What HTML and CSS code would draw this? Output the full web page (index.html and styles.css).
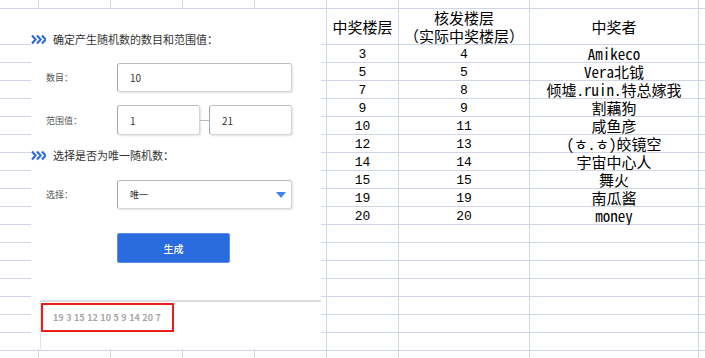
FILE: index.html
```html
<!DOCTYPE html>
<html lang="zh-CN">
<head>
<meta charset="utf-8">
<title>随机数</title>
<link rel="stylesheet" href="styles.css">
</head>
<body>
<div class="sheet">
  <div class="row"><i></i><i></i><i></i><i></i><i></i><i></i><i></i><i></i><i></i></div>
  <div class="row head"><i></i><i></i><i></i><i></i><i></i><b>中奖楼层</b><b class="two">核发楼层<br>（实际中奖楼层）</b><b>中奖者</b><i></i></div>
  <div class="row"><i></i><i></i><i></i><i></i><i></i><b class="num">3</b><b class="num">4</b><b>Amikeco</b><i></i></div>
  <div class="row"><i></i><i></i><i></i><i></i><i></i><b class="num">5</b><b class="num">5</b><b>Vera北钺</b><i></i></div>
  <div class="row"><i></i><i></i><i></i><i></i><i></i><b class="num">7</b><b class="num">8</b><b>倾墟.ruin.特总嫁我</b><i></i></div>
  <div class="row"><i></i><i></i><i></i><i></i><i></i><b class="num">9</b><b class="num">9</b><b>割藕狗</b><i></i></div>
  <div class="row"><i></i><i></i><i></i><i></i><i></i><b class="num">10</b><b class="num">11</b><b>咸鱼彦</b><i></i></div>
  <div class="row"><i></i><i></i><i></i><i></i><i></i><b class="num">12</b><b class="num">13</b><b>(ㅎ.ㅎ)皎镜空</b><i></i></div>
  <div class="row"><i></i><i></i><i></i><i></i><i></i><b class="num">14</b><b class="num">14</b><b>宇宙中心人</b><i></i></div>
  <div class="row"><i></i><i></i><i></i><i></i><i></i><b class="num">15</b><b class="num">15</b><b>舞火</b><i></i></div>
  <div class="row"><i></i><i></i><i></i><i></i><i></i><b class="num">19</b><b class="num">19</b><b>南瓜酱</b><i></i></div>
  <div class="row"><i></i><i></i><i></i><i></i><i></i><b class="num">20</b><b class="num">20</b><b>money</b><i></i></div>
  <div class="row"><i></i><i></i><i></i><i></i><i></i><i></i><i></i><i></i><i></i></div>
  <div class="row"><i></i><i></i><i></i><i></i><i></i><i></i><i></i><i></i><i></i></div>
  <div class="row"><i></i><i></i><i></i><i></i><i></i><i></i><i></i><i></i><i></i></div>
  <div class="row"><i></i><i></i><i></i><i></i><i></i><i></i><i></i><i></i><i></i></div>
  <div class="row"><i></i><i></i><i></i><i></i><i></i><i></i><i></i><i></i><i></i></div>
  <div class="row"><i></i><i></i><i></i><i></i><i></i><i></i><i></i><i></i><i></i></div>
  <div class="row"><i></i><i></i><i></i><i></i><i></i><i></i><i></i><i></i><i></i></div>
  <div class="row"><i></i><i></i><i></i><i></i><i></i><i></i><i></i><i></i><i></i></div>
</div>

<div class="panel">
  <div class="heading">
    <svg class="chev" width="15" height="11" viewBox="0 0 15 11"><path d="M1 1.5L4.6 5.5L1 9.5M6 1.5L9.6 5.5L6 9.5M11 1.5L14.6 5.5L11 9.5" fill="none" stroke="#2f6ce0" stroke-width="2.2"/></svg>
    <span>确定产生随机数的数目和范围值：</span>
  </div>
  <div class="field first">
    <label>数目：</label>
    <div class="input wide">10</div>
  </div>
  <div class="field range">
    <label>范围值：</label>
    <div class="input half">1</div>
    <span class="dash"></span>
    <div class="input half">21</div>
  </div>
  <div class="heading second">
    <svg class="chev" width="15" height="11" viewBox="0 0 15 11"><path d="M1 1.5L4.6 5.5L1 9.5M6 1.5L9.6 5.5L6 9.5M11 1.5L14.6 5.5L11 9.5" fill="none" stroke="#2f6ce0" stroke-width="2.2"/></svg>
    <span>选择是否为唯一随机数：</span>
  </div>
  <div class="field select-row">
    <label>选择：</label>
    <div class="input wide select">唯一<span class="caret"></span></div>
  </div>
  <div class="actions"><button class="btn">生成</button></div>
  <div class="result">
    <div class="output">19 3 15 12 10 5 9 14 20 7</div>
  </div>
</div>
</body>
</html>
```
FILE: styles.css
```css
html, body {
  margin: 0;
  padding: 0;
  background: #fff;
}
.sheet {
  width: 705px;
  height: 358px;
  display: grid;
  grid-template-columns: 38px 71px 71px 71px 71px 71px 130px 168px 1fr;
  grid-template-rows: 8px 35px repeat(17, 17px) 1fr;
  gap: 1px;
  background: #cfd6e4;
  overflow: hidden;
  font-family: "Noto Sans Mono CJK SC", "Liberation Mono", "Noto Sans CJK SC", monospace;
  font-size: 15px;
  color: #000;
}
.row { display: contents; }
.sheet i, .sheet b {
  background: #fff;
  font-style: normal;
  font-weight: normal;
}
.sheet b {
  display: flex;
  align-items: center;
  justify-content: center;
  text-align: center;
  line-height: 17px;
  white-space: nowrap;
}
.sheet b.num {
  font-family: "Liberation Mono", monospace;
  font-size: 13px;
  padding-top: 2px;
  box-sizing: border-box;
}
.head b {
  font-family: "Noto Sans CJK SC", sans-serif;
}
.head b.two {
  line-height: 18px;
}

.panel {
  position: absolute;
  left: 31px;
  top: 9px;
  width: 290px;
  height: 340px;
  background: #fff;
  display: flex;
  flex-direction: column;
  font-family: "Noto Sans CJK SC", sans-serif;
  color: #333;
}
.heading {
  height: 16px;
  margin-top: 22px;
  display: flex;
  align-items: center;
  gap: 7px;
  font-size: 11px;
  color: #333;
}
.heading.second { margin-top: 12px; }
.field {
  display: flex;
  align-items: center;
  height: 29px;
}
.field.first { margin-top: 16px; }
.field.range { margin-top: 13px; height: 30px; }
.field.select-row { margin-top: 17px; }
.field label {
  width: 71px;
  padding-left: 15px;
  font-size: 9px;
  color: #555;
}
.input {
  box-sizing: border-box;
  height: 100%;
  display: flex;
  align-items: center;
  padding-left: 12px;
  font-size: 10px;
  color: #333;
  background: #fff;
  border: 1px solid #d6d6d6;
  border-left-color: #a8a8a8;
  border-top-color: #bdbdbd;
  border-radius: 3px;
  box-shadow: 1px 1px 2px rgba(0, 0, 0, 0.12);
}
.input.wide { width: 175px; }
.input.half { width: 83px; }
.dash {
  width: 9px;
  height: 1px;
  background: #bbb;
}
.select {
  justify-content: space-between;
  padding-right: 5px;
  font-size: 9px;
}
.caret {
  width: 0;
  height: 0;
  border-left: 5px solid transparent;
  border-right: 5px solid transparent;
  border-top: 6px solid #3d84ee;
}
.actions {
  margin-top: 24px;
  padding-left: 86px;
  display: flex;
}
.btn {
  width: 113px;
  height: 30px;
  border: 1px solid #5a8fe9;
  border-radius: 2px;
  background: #2b6be0;
  color: #fff;
  font-family: "Noto Sans CJK SC", sans-serif;
  font-size: 10px;
  font-weight: 500;
  padding: 0;
}
.result {
  margin-top: 37px;
  margin-left: 9px;
  flex: 1;
  border-top: 2px solid #dedede;
  border-left: 1px solid #e2e2e2;
}
.output {
  box-sizing: border-box;
  margin-top: 1px;
  width: 133px;
  height: 29px;
  border: 2px solid #f01c1c;
  padding-left: 10px;
  display: flex;
  align-items: center;
  font-family: "Noto Sans CJK SC", sans-serif;
  font-size: 9px;
  word-spacing: 0.5px;
  font-weight: 700;
  color: #a6a6a6;
  white-space: nowrap;
}
```
